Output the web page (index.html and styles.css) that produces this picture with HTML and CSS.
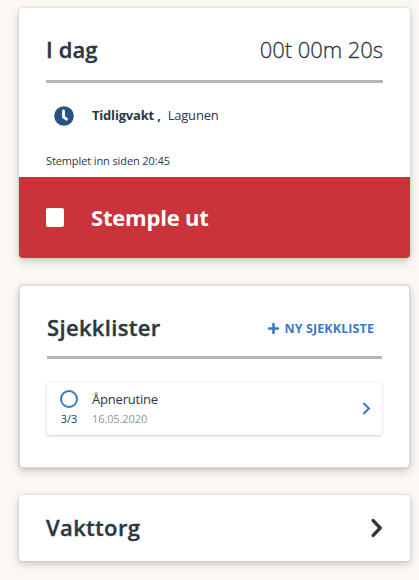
FILE: index.html
```html
<!DOCTYPE html>
<html lang="no">
<head>
<meta charset="utf-8">
<title>I dag</title>
<link rel="stylesheet" href="styles.css">
</head>
<body>
<main class="page">
  <section class="card today">
    <div class="today-body">
      <header class="card-header">
        <h2 class="title">I dag</h2>
        <span class="timer">00t 00m 20s</span>
      </header>
      <div class="shift">
        <svg class="clock" viewBox="0 0 20 20"><circle cx="10" cy="10" r="9.8" fill="#24547f"/><path d="M9.5 5v6l3 2.2" fill="none" stroke="#fff" stroke-width="2.8" stroke-linecap="round" stroke-linejoin="round"/></svg>
        <span class="shift-name">Tidligvakt ,</span>
        <span class="shift-place">Lagunen</span>
      </div>
      <p class="since">Stemplet inn siden 20:45</p>
    </div>
    <button class="clock-out"><span class="stop"></span><span class="clock-out-label">Stemple ut</span></button>
  </section>

  <section class="card checklists">
    <header class="card-header">
      <h2 class="title">Sjekklister</h2>
      <button class="new-list">
        <svg class="plus" viewBox="0 0 11 11"><path d="M5.5 1v9M1 5.5h9" fill="none" stroke="#3c78c8" stroke-width="2.6" stroke-linecap="round"/></svg>
        <span class="new-list-label">NY SJEKKLISTE</span>
      </button>
    </header>
    <div class="item">
      <div class="status">
        <span class="ring"></span>
        <span class="count">3/3</span>
      </div>
      <div class="item-text">
        <span class="item-name">Åpnerutine</span>
        <span class="item-date">16.05.2020</span>
      </div>
      <svg class="item-arrow" viewBox="0 0 9 13"><path d="M1.4 1L7 6.5 1.4 12" fill="none" stroke="#3c78c8" stroke-width="2.1"/></svg>
    </div>
  </section>

  <section class="card market">
    <h2 class="title">Vakttorg</h2>
    <svg class="market-arrow" viewBox="0 0 12 20"><path d="M2.2 2.6L9.2 10l-7 7.4" fill="none" stroke="#2b3842" stroke-width="3.4" stroke-linecap="round" stroke-linejoin="round"/></svg>
  </section>
</main>
</body>
</html>
```

FILE: styles.css
```css
* {
  box-sizing: border-box;
}

body {
  margin: 0;
  background: #fbf8f3;
  color: #2b3842;
  font-family: "Open Sans", "Noto Sans", sans-serif;
}

button {
  border: 0;
  background: none;
  font-family: inherit;
  padding: 0;
}

.page {
  display: flex;
  flex-direction: column;
  gap: 27px;
  height: 580px;
  padding: 8px 9px 0 19px;
  overflow: hidden;
}

.card {
  flex: none;
  background: #fff;
  border-radius: 4px;
  box-shadow: 0 3px 8px rgba(0, 0, 0, .2), 0 0 2px rgba(0, 0, 0, .18);
}

.card-header {
  display: flex;
  align-items: center;
  justify-content: space-between;
  border-bottom: 3px solid #b5b6b6;
}

.title {
  margin: 0;
  font-size: 22px;
  font-weight: 600;
  letter-spacing: .33px;
  line-height: 30px;
  white-space: nowrap;
  -webkit-text-stroke: .35px currentColor;
}

.today {
  height: 250px;
  overflow: hidden;
}

.today .title {
  letter-spacing: .1px;
}

.today-body {
  height: 169px;
  padding: 26px 27px 0;
}

.today .card-header {
  height: 49px;
  padding-bottom: 16px;
}

.timer {
  font-size: 22px;
  font-weight: 300;
  letter-spacing: -.05px;
  line-height: 30px;
  white-space: nowrap;
  -webkit-text-stroke: .3px currentColor;
}

.shift {
  display: flex;
  align-items: center;
  height: 20px;
  margin: 23px 0 0 8px;
  font-size: 13px;
  line-height: 18px;
}

.clock {
  width: 20px;
  height: 20px;
  margin-right: 18px;
}

.shift-name,
.shift-place {
  padding-bottom: 2px;
}

.shift-name {
  margin-right: 7px;
  font-weight: 700;
  letter-spacing: -.2px;
}

.shift-place {
  letter-spacing: -.2px;
}

.since {
  margin: 27px 0 0;
  font-size: 11px;
  letter-spacing: -.11px;
  line-height: 15px;
}

.clock-out {
  display: flex;
  align-items: center;
  width: 100%;
  height: 81px;
  padding-left: 27px;
  background: #c93339;
  color: #fff;
}

.stop {
  width: 18px;
  height: 19px;
  margin-right: 27px;
  border-radius: 2px;
  background: #fff;
}

.clock-out-label {
  padding-bottom: 2px;
  font-size: 22px;
  font-weight: 700;
  letter-spacing: -.2px;
  line-height: 30px;
}

.checklists {
  height: 183px;
  padding: 25px 27px 27px;
  border: 1px solid #d9dad8;
}

.checklists .card-header {
  height: 48px;
  padding-bottom: 14px;
}

.new-list {
  display: flex;
  align-items: center;
  gap: 6px;
  padding: 3px 8px 0 0;
  color: #3c78c8;
}

.plus {
  width: 11px;
  height: 11px;
}

.new-list-label {
  padding-top: 1px;
  font-size: 12.5px;
  font-weight: 700;
  letter-spacing: .1px;
  line-height: 16px;
}

.item {
  display: flex;
  align-items: center;
  height: 53px;
  margin-top: 23px;
  padding: 0 11px 0 13px;
  border-radius: 2px;
  box-shadow: 0 1px 3px rgba(0, 0, 0, .18), 0 0 1px rgba(0, 0, 0, .15);
}

.status {
  display: flex;
  flex-direction: column;
  align-items: center;
  width: 18px;
  margin-right: 14px;
  padding-bottom: 2px;
}

.ring {
  width: 18px;
  height: 18px;
  border: 2px solid #3c78c8;
  border-radius: 50%;
}

.count {
  margin-top: 4px;
  font-size: 11px;
  line-height: 14px;
}

.item-text {
  display: flex;
  flex: 1;
  flex-direction: column;
}

.item-name {
  margin-top: -1px;
  font-size: 13px;
  letter-spacing: -.2px;
  line-height: 20px;
}

.item-date {
  color: #929699;
  font-size: 11px;
  letter-spacing: -.1px;
  line-height: 19px;
}

.item-arrow {
  width: 9px;
  height: 13px;
}

.market {
  display: flex;
  align-items: center;
  justify-content: space-between;
  height: 66px;
  padding: 0 27px;
}

.market .title {
  padding-bottom: 2px;
}

.market-arrow {
  width: 12px;
  height: 20px;
}
```
